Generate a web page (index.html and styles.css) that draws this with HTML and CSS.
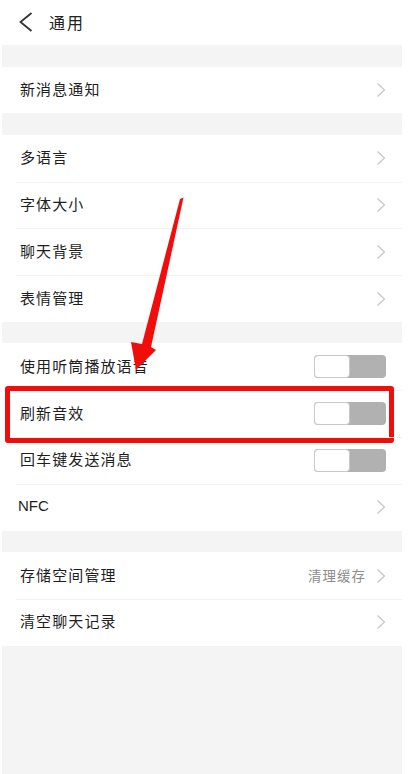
FILE: index.html
```html
<!DOCTYPE html>
<html lang="zh-CN">
<head>
<meta charset="utf-8">
<title>通用</title>
<link rel="stylesheet" href="styles.css">
</head>
<body>
<div class="page">
  <header class="topbar">
    <svg class="back" width="14" height="20" viewBox="0 0 14 20"><polyline points="12.5,1 1.5,10 12.5,19" fill="none" stroke="#333" stroke-width="1.8" stroke-linejoin="miter"/></svg>
    <span class="title">通用</span>
  </header>

  <section class="group">
    <div class="row"><span class="label">新消息通知</span><svg class="chev" width="10" height="16" viewBox="0 0 10 16"><polyline points="1.5,1.5 8.5,8 1.5,14.5" fill="none" stroke="#c6c6c6" stroke-width="1.2"/></svg></div>
  </section>

  <section class="group">
    <div class="row"><span class="label">多语言</span><svg class="chev" width="10" height="16" viewBox="0 0 10 16"><polyline points="1.5,1.5 8.5,8 1.5,14.5" fill="none" stroke="#c6c6c6" stroke-width="1.2"/></svg></div>
    <div class="row"><span class="label">字体大小</span><svg class="chev" width="10" height="16" viewBox="0 0 10 16"><polyline points="1.5,1.5 8.5,8 1.5,14.5" fill="none" stroke="#c6c6c6" stroke-width="1.2"/></svg></div>
    <div class="row"><span class="label">聊天背景</span><svg class="chev" width="10" height="16" viewBox="0 0 10 16"><polyline points="1.5,1.5 8.5,8 1.5,14.5" fill="none" stroke="#c6c6c6" stroke-width="1.2"/></svg></div>
    <div class="row"><span class="label">表情管理</span><svg class="chev" width="10" height="16" viewBox="0 0 10 16"><polyline points="1.5,1.5 8.5,8 1.5,14.5" fill="none" stroke="#c6c6c6" stroke-width="1.2"/></svg></div>
  </section>

  <section class="group">
    <div class="row"><span class="label">使用听筒播放语音</span><span class="switch"><span class="knob"></span></span></div>
    <div class="row highlighted"><span class="label">刷新音效</span><span class="switch"><span class="knob"></span></span><span class="redbox"></span></div>
    <div class="row"><span class="label">回车键发送消息</span><span class="switch"><span class="knob"></span></span></div>
    <div class="row"><span class="label latin">NFC</span><svg class="chev" width="10" height="16" viewBox="0 0 10 16"><polyline points="1.5,1.5 8.5,8 1.5,14.5" fill="none" stroke="#c6c6c6" stroke-width="1.2"/></svg></div>
  </section>

  <section class="group">
    <div class="row"><span class="label">存储空间管理</span><span class="value">清理缓存</span><svg class="chev" width="10" height="16" viewBox="0 0 10 16"><polyline points="1.5,1.5 8.5,8 1.5,14.5" fill="none" stroke="#c6c6c6" stroke-width="1.2"/></svg></div>
    <div class="row"><span class="label">清空聊天记录</span><svg class="chev" width="10" height="16" viewBox="0 0 10 16"><polyline points="1.5,1.5 8.5,8 1.5,14.5" fill="none" stroke="#c6c6c6" stroke-width="1.2"/></svg></div>
  </section>

  <svg class="arrow" width="400" height="774" viewBox="0 0 400 774">
    <polygon points="180,199 183.5,197.5 151,347 156,350 136,370 131,342 142,344" fill="#f20d0d"/>
  </svg>
</div>
</body>
</html>
```

FILE: styles.css
```css
html, body {
  margin: 0;
  padding: 0;
  background: #ffffff;
}

body {
  font-family: "Noto Sans CJK SC", "Noto Sans", sans-serif;
  color: #222;
}

.page {
  position: relative;
  margin: 0 8px 0 2px;
  min-height: 774px;
  background: #f4f4f4;
}

.topbar {
  height: 45px;
  background: #ffffff;
  display: flex;
  align-items: center;
  padding-left: 17px;
  padding-bottom: 2px;
  box-sizing: border-box;
  gap: 16px;
}

.back {
  display: block;
}

.title {
  font-size: 16px;
  line-height: 20px;
  letter-spacing: 2px;
  color: #222;
}

.group {
  margin-top: 21.5px;
  background: #ffffff;
}

.row {
  position: relative;
  height: 46.8px;
  display: flex;
  align-items: center;
  padding: 0 16px 0 18px;
  box-sizing: border-box;
}

.row + .row::before {
  content: "";
  position: absolute;
  top: 0;
  left: 14px;
  right: 0;
  height: 1px;
  background: #f2f2f2;
}

.label {
  flex: 1;
  font-size: 15px;
  line-height: 18px;
  padding-bottom: 2px;
  letter-spacing: 1.1px;
  color: #1e1e1e;
}

.label.latin {
  font-family: "Liberation Sans", Arial, sans-serif;
  letter-spacing: 0;
  font-size: 15px;
  margin-left: -2px;
}

.value {
  font-size: 13.5px;
  line-height: 18px;
  padding-bottom: 2px;
  letter-spacing: 1px;
  color: #8c8c8c;
  margin-right: 10px;
}

.chev {
  display: block;
}

.switch {
  display: flex;
  width: 72px;
  height: 23px;
  border-radius: 4px;
  background: #b1b1b1;
}

.knob {
  width: 36px;
  height: 23px;
  box-sizing: border-box;
  background: #ffffff;
  border: 1.5px solid #c9c9c9;
  border-radius: 4px;
}

.redbox {
  position: absolute;
  top: -4px;
  bottom: -6px;
  left: 3px;
  right: 8px;
  border: 5px solid #f20d0d;
  border-radius: 3px;
  pointer-events: none;
}

.arrow {
  position: absolute;
  top: 0;
  left: -2px;
  pointer-events: none;
}
```
